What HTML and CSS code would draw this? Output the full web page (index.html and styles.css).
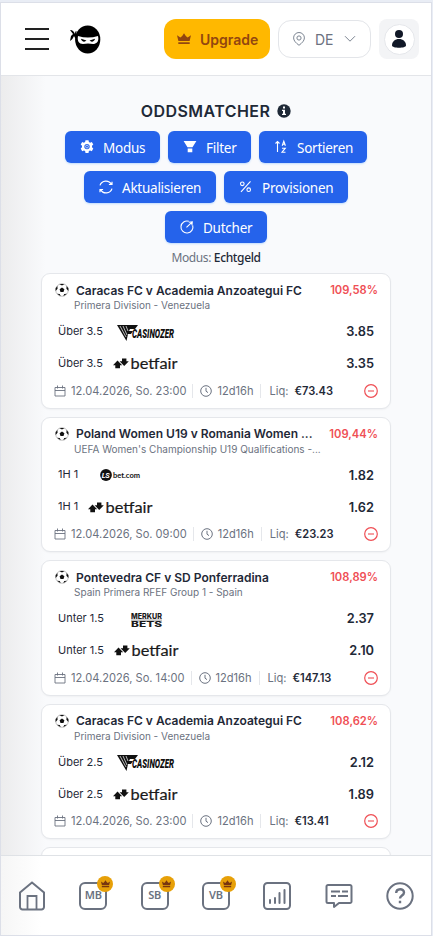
FILE: index.html
```
<!DOCTYPE html>
<html lang="de">
<head>
<meta charset="utf-8">
<title>Oddsmatcher</title>
<link rel="stylesheet" href="styles.css">
</head>
<body>
<svg class="defs" width="0" height="0">
  <symbol id="crown" viewBox="0 0 14 12"><path fill="currentColor" d="M0 2.200 3.400 4.600 5.200 3 7 .2 8.800 3l1.800 1.600L14 2.200 12.600 8H1.400zM1.300 9.200h11.400v1.800H1.300z"/></symbol>
  <symbol id="ball" viewBox="0 0 14 14"><circle cx="7" cy="7" r="6.300" fill="#fff" stroke="#999" stroke-width=".6"/><path fill="#111" d="m7 4.600 2.400 1.700-.9 2.800h-3l-.9-2.800zM4.300.9h5.200L7 2.500zM.6 5.200 2.400 3l.2 2.700L.6 8zM13.400 5.200 11.600 3l-.2 2.700L13.400 8zM2 10.800l2.800.1.9 2.400zM12 10.800l-2.800.1-.9 2.400z"/></symbol>
  <symbol id="calendar" viewBox="0 0 12 12"><path fill="none" stroke="#6b7280" stroke-width=".9" d="M1 2.500h10v8.500H1zM1 5.500h10M3.500.5v3M8.500.5v3"/></symbol>
  <symbol id="clock" viewBox="0 0 12 12"><circle cx="6" cy="6" r="5.300" fill="none" stroke="#6b7280"/><path fill="none" stroke="#6b7280" d="M6 2.800v3.400l2 1.400"/></symbol>
  <symbol id="minus" viewBox="0 0 14 14"><circle cx="7" cy="7" r="6.300" fill="none" stroke="#ef4f55" stroke-width="1.200"/><path stroke="#ef4f55" stroke-width="1.100" d="M4 7h6"/></symbol>
  <symbol id="arrows" viewBox="0 0 66 15"><path fill="#111" d="m4.500 4.500 4.700 4.700H7v3H2.300v-3H0zM11.200 10 6.600 5.300H9V2.500h4.400v2.800h2.400z"/></symbol>
  <symbol id="wing" viewBox="0 0 58 16"><path fill="#111" d="M0 0h21l-3 4h-5l-1 2h4l-2 3h-3L9.500 16z"/><path stroke="#fff" stroke-width=".7" fill="none" d="m3 1 6 11M6 1l4 9M9 1l2 5"/></symbol>
</svg>
<div class="app">
  <header class="header">
    <svg class="burger" width="24" height="24" viewBox="0 0 24 24"><path stroke="#222" stroke-width="2" d="M0 2h24M0 12h24M0 22h24"/></svg>
    <svg class="ninja" width="31" height="29" viewBox="0 0 31 29"><ellipse cx="17.700" cy="14.500" rx="12.600" ry="14"/><path d="M0 5c3 0 4 2 5 4 0-2 .5-3 1.500-3l-.5 8c-1-1-1.500-2-2-3-1 2-2 4-4 5l1-5 2-2z"/><path fill="#fff" d="M8 11q10 3 20 0c1.500 6-2 8-5 8q-5-1-10 0c-4 0-6-3-5-8z"/><path d="m11 13.800 5.500 1.800c-2 2-5 1-5.500-1.800zM25 13.800l-5.500 1.800c2 2 5 1 5.500-1.800z"/></svg>
    <button class="upgrade"><svg width="14" height="12"><use href="#crown"/></svg><span>Upgrade</span></button>
    <button class="lang"><svg width="12" height="14" viewBox="0 0 12 14" fill="none" stroke="#7c8592"><path d="M6 13.300C3 11 .6 8.700.6 5.900a5.400 5.400 0 0 1 10.800 0C11.400 8.700 9 11 6 13.300z"/><circle cx="6" cy="6" r="2.100"/></svg><span>DE</span><svg width="12" height="8" viewBox="0 0 12 8"><path fill="none" stroke="#7c8592" d="m1 1.200 5 5 5-5"/></svg></button>
    <div class="account"><div class="avatar"><svg width="16" height="18" viewBox="0 0 16 18" fill="#111827"><circle cx="8" cy="4" r="4"/><path d="M1 15.500c0-4 3-6.500 7-6.500s7 2.500 7 6.500c0 3-14 3-14 0z"/></svg></div></div>
  </header>
  <main class="content">
    <h1><span>ODDSMATCHER</span><svg width="14" height="14" viewBox="0 0 14 14"><circle cx="7" cy="7" r="6.700" fill="#1f2937"/><path fill="#fff" d="M6 2.500h2v2H6zM5 5.700h3v4h1v1.400H5V9.700h1V7H5z"/></svg></h1>
    <div class="actions">
      <button><svg viewBox="0 0 14 14"><path fill="#fff" fill-rule="evenodd" d="m5.500.3h3l.4 1.800 1.200.6 1.700-.8 1.500 2.500-1.300 1.300v1.600l1.300 1.300-1.500 2.600-1.700-.7-1.200.6-.4 1.800h-3l-.4-1.800-1.200-.6-1.700.7L.7 8.600 2 7.300V5.700L.7 4.400l1.500-2.500 1.700.8 1.200-.6zM7 3.900a2.700 2.700 0 1 0 0 5.400 2.700 2.700 0 0 0 0-5.400"/><circle cx="7" cy="6.600" r="1.400" fill="none" stroke="#fff" stroke-width=".6"/></svg><span class="w43">Modus</span></button>
      <button><svg viewBox="0 0 14 14"><path fill="#fff" d="M.6 1h12.800L9.500 7.300h-5zM4.700 8.600h4.600v3.700H4.700z"/></svg><span class="w31">Filter</span></button>
      <button><svg viewBox="0 0 14 14"><path fill="none" stroke="#fff" stroke-width="1.100" d="M3.500 12V1.500M1.500 3.500l2-2 2 2M8.200 5.700l1.600-4.500 1.600 4.500M8.700 4.300h2.200M8 8.200h3.300L8 12.200h3.500"/></svg><span class="w56">Sortieren</span></button>
      <button><svg viewBox="0 0 14 14"><path fill="none" stroke="#fff" stroke-width="1.200" d="M1 5.400a6.200 6.200 0 0 1 11.400-1M13 8.600a6.200 6.200 0 0 1-11.400 1M9.900 4.500H13V1.700M4.100 9.500H1v2.800"/></svg><span class="w80">Aktualisieren</span></button>
      <button><svg viewBox="0 0 14 14"><g fill="none" stroke="#fff" stroke-width="1.100"><circle cx="3.300" cy="3.800" r="1.800"/><circle cx="9.700" cy="9.700" r="1.800"/><path d="m2 11.800 9.500-10.500"/></g></svg><span class="w72">Provisionen</span></button>
      <button><svg viewBox="0 0 14 14"><path fill="none" stroke="#fff" stroke-width="1.100" d="M8.800 1.300a6 6 0 1 0 3.900 4M6.500 7.400l5.800-5.600M8.800 2.300l3.500-.5-.4 3.400"/></svg><span class="w50">Dutcher</span></button>
    </div>
    <p class="mode">Modus: <b>Echtgeld</b></p>
    <section class="list">
      <article class="card">
        <div class="top"><svg width="14" height="14"><use href="#ball"/></svg><h2>Caracas FC v Academia Anzoategui FC</h2><strong>109,58%</strong></div>
        <p class="league">Primera Division - Venezuela</p>
        <div class="bet"><span>Über 3.5</span><svg class="casinozer" width="58" height="16"><use href="#wing"/><text x="15" y="12.500" textLength="42" lengthAdjust="spacingAndGlyphs">CASINOZER</text></svg><b>3.85</b></div>
        <div class="bet"><span>Über 3.5</span><svg class="betfair" width="66" height="15"><use href="#arrows"/><text x="17.500" y="12.500" textLength="47" lengthAdjust="spacingAndGlyphs">betfair</text></svg><b>3.35</b></div>
        <div class="meta"><svg width="12" height="12"><use href="#calendar"/></svg><span class="date">12.04.2026, So. 23:00</span><i></i><svg width="12" height="12"><use href="#clock"/></svg><span class="left">12d16h</span><i></i><span class="liq">Liq:</span><b>€73.43</b><svg class="hide" width="14" height="14"><use href="#minus"/></svg></div>
      </article>
      <article class="card">
        <div class="top"><svg width="14" height="14"><use href="#ball"/></svg><h2>Poland Women U19 v Romania Women ...</h2><strong>109,44%</strong></div>
        <p class="league">UEFA Women's Championship U19 Qualifications -...</p>
        <div class="bet short"><span>1H 1</span><svg class="lsbet" width="40" height="12"><circle cx="6" cy="6" r="5.900" fill="#111"/><text class="ls" x="1.800" y="8.800" textLength="8">LS</text><text x="13" y="9" textLength="27" lengthAdjust="spacingAndGlyphs">bet.com</text></svg><b>1.82</b></div>
        <div class="bet short"><span>1H 1</span><svg class="betfair" width="66" height="15"><use href="#arrows"/><text x="17.500" y="12.500" textLength="47" lengthAdjust="spacingAndGlyphs">betfair</text></svg><b>1.62</b></div>
        <div class="meta"><svg width="12" height="12"><use href="#calendar"/></svg><span class="date">12.04.2026, So. 09:00</span><i></i><svg width="12" height="12"><use href="#clock"/></svg><span class="left">12d16h</span><i></i><span class="liq">Liq:</span><b>€23.23</b><svg class="hide" width="14" height="14"><use href="#minus"/></svg></div>
      </article>
      <article class="card">
        <div class="top"><svg width="14" height="14"><use href="#ball"/></svg><h2>Pontevedra CF v SD Ponferradina</h2><strong>108,89%</strong></div>
        <p class="league">Spain Primera RFEF Group 1 - Spain</p>
        <div class="bet wide"><span>Unter 1.5</span><svg class="merkur" width="31" height="15"><path fill="#c4c4c4" d="M0 6.300h31v2.500H0z"/><text x="0" y="5.500" textLength="31" lengthAdjust="spacingAndGlyphs">MERKUR</text><text x="0" y="14" textLength="31" lengthAdjust="spacingAndGlyphs">BETS</text></svg><b>2.37</b></div>
        <div class="bet wide"><span>Unter 1.5</span><svg class="betfair" width="66" height="15"><use href="#arrows"/><text x="17.500" y="12.500" textLength="47" lengthAdjust="spacingAndGlyphs">betfair</text></svg><b>2.10</b></div>
        <div class="meta"><svg width="12" height="12"><use href="#calendar"/></svg><span class="date">12.04.2026, So. 14:00</span><i></i><svg width="12" height="12"><use href="#clock"/></svg><span class="left">12d16h</span><i></i><span class="liq">Liq:</span><b>€147.13</b><svg class="hide" width="14" height="14"><use href="#minus"/></svg></div>
      </article>
      <article class="card">
        <div class="top"><svg width="14" height="14"><use href="#ball"/></svg><h2>Caracas FC v Academia Anzoategui FC</h2><strong>108,62%</strong></div>
        <p class="league">Primera Division - Venezuela</p>
        <div class="bet"><span>Über 2.5</span><svg class="casinozer" width="58" height="16"><use href="#wing"/><text x="15" y="12.500" textLength="42" lengthAdjust="spacingAndGlyphs">CASINOZER</text></svg><b>2.12</b></div>
        <div class="bet"><span>Über 2.5</span><svg class="betfair" width="66" height="15"><use href="#arrows"/><text x="17.500" y="12.500" textLength="47" lengthAdjust="spacingAndGlyphs">betfair</text></svg><b>1.89</b></div>
        <div class="meta"><svg width="12" height="12"><use href="#calendar"/></svg><span class="date">12.04.2026, So. 23:00</span><i></i><svg width="12" height="12"><use href="#clock"/></svg><span class="left">12d16h</span><i></i><span class="liq">Liq:</span><b>€13.41</b><svg class="hide" width="14" height="14"><use href="#minus"/></svg></div>
      </article>
      <article class="card"></article>
    </section>
  </main>
  <nav class="nav">
    <svg width="28" height="30" viewBox="0 0 28 30" fill="none" stroke="#6b7280" stroke-width="2"><path d="M2 11.500 14 1.500l12 10V26a2.500 2.500 0 0 1-2.500 2.500h-19A2.500 2.500 0 0 1 2 26z"/><path d="M9.500 28V15h9v13" stroke-width="1.800"/></svg>
    <div class="tile">MB<em><svg width="9" height="8"><use href="#crown"/></svg></em></div>
    <div class="tile">SB<em><svg width="9" height="8"><use href="#crown"/></svg></em></div>
    <div class="tile">VB<em><svg width="9" height="8"><use href="#crown"/></svg></em></div>
    <svg width="28" height="28" viewBox="0 0 28 28" fill="none" stroke="#6b7280" stroke-width="2"><rect x="1" y="1" width="26" height="26" rx="3.500"/><path stroke-linecap="round" d="M7 21v-3M12 21v-5M16.500 21V11M21.500 21V8"/></svg>
    <svg width="28" height="28" viewBox="0 0 28 28" fill="none" stroke="#6b7280" stroke-width="2"><path stroke-linejoin="round" d="M3 3h22a1.500 1.500 0 0 1 1.500 1.500v15A1.500 1.500 0 0 1 25 21H14l-5 4v-4H3a1.500 1.500 0 0 1-1.500-1.500v-15A1.500 1.500 0 0 1 3 3z"/><path d="M6 9.500h9M17 9.500h6M6 14h5M13 14h10"/></svg>
    <svg width="28" height="28" viewBox="0 0 28 28" fill="none" stroke="#6b7280" stroke-width="2"><circle cx="14" cy="14" r="12.700"/><path stroke-width="2.400" d="M10.200 11c0-5 7.800-5 7.800-.5 0 3-4 3-4 6M14 18.800v2.500"/></svg>
  </nav>
</div>
</body>
</html>
```
FILE: styles.css
```
* { box-sizing: border-box; margin: 0; padding: 0; }
body { background: #e9edf5; font-family: Inter, sans-serif; color: #1f2937; height: 936px; overflow: hidden; }
svg { display: block; flex: none; overflow: visible; }
.defs { position: absolute; }
button { font: inherit; border: 0; }
.app { height: 934px; margin-top: 2px; width: 432px; border: 1px solid #dcdfe8; display: flex; flex-direction: column; background: #f9fafc; }
.header { height: 73px; flex: none; background: #fff; border-bottom: 1px solid #e3e5e9; display: flex; align-items: center; padding: 0 12px 0 24px; }
.ninja { margin-left: 21px; }
.upgrade { margin-left: 63px; width: 106px; height: 40px; border-radius: 12px; background: #ffb800; color: #924610; display: flex; align-items: center; padding-left: 13px; font-size: 14px; font-weight: 600; }
.upgrade span { margin-left: 9px; }
.lang { margin-left: 8px; width: 93px; height: 38px; border-radius: 13px; border: 1px solid #e3e5e9; background: #fff; display: flex; align-items: center; padding-left: 14px; color: #6b7280; font-size: 14px; }
.lang span { margin: 0 10px; }
.account { margin-left: 8px; width: 40px; height: 40px; border-radius: 8px; background: #f3f4f6; display: grid; place-items: center; }
.avatar { width: 31px; height: 31px; border-radius: 50%; background: #fff; border: 1px solid #e5e7eb; display: grid; place-items: center; }
.content { flex: 1; min-height: 0; overflow: hidden; padding: 26px 40px 0; background: linear-gradient(90deg, #ececed, #f9fafc 45px); }
h1 { display: flex; justify-content: center; align-items: center; gap: 7px; font-size: 16px; line-height: 18px; font-weight: 600; letter-spacing: .45px; }
.actions { display: flex; flex-wrap: wrap; justify-content: center; gap: 8px; margin: 11px 0 0; }
.actions button { height: 32px; border-radius: 6px; background: #2563eb; color: #fff; display: flex; align-items: center; gap: 9px; padding: 1px 14px 0 15px; font-family: "Noto Sans", sans-serif; font-size: 13.500px; letter-spacing: -.25px; white-space: nowrap; box-shadow: 0 1px 2px #bfdbfe; }
.actions span { text-align: left; }
.w31 { width: 31px; }
.w43 { width: 43px; }
.w50 { width: 50px; }
.w56 { width: 56px; }
.w72 { width: 72px; }
.w80 { width: 80px; }
.actions svg { width: 14px; height: 14px; margin-top: -1px; }
.mode { font: 12px/16px "Noto Sans", sans-serif; letter-spacing: -.37px; text-align: center; color: #6b7280; margin-top: 7px; }
.mode b { color: #1f2937; font-weight: 500; }
.list { display: flex; flex-direction: column; gap: 8px; margin-top: 7px; }
.card { height: 135.500px; flex: none; background: #fff; border: 1px solid #e5e7eb; border-radius: 9px; box-shadow: 0 1px 2px #0000000a; padding: 8px 12px 0; }
.top { display: flex; align-items: center; height: 16px; }
.top svg { margin-left: 1px; }
h2 { font-size: 12px; font-weight: 600; margin-left: 7px; white-space: nowrap; }
.top strong { margin-left: auto; font-size: 11.200px; font-weight: 600; color: #ef4f55; }
.league { font-size: 10px; line-height: 13px; padding-top: 1px; color: #6b7280; margin-left: 20px; white-space: nowrap; }
.bet { height: 32px; display: flex; align-items: center; padding: 7px 4px 0; }
.bet span { width: 54px; font-size: 11px; margin-top: -1px; white-space: nowrap; }
.short span { width: 30px; margin-top: -3px; }
.wide span { width: 55px; }
.bet b { margin-left: auto; font-size: 12.800px; font-weight: 600; }
.bet .betfair { margin-left: 1px; }
.short .betfair { margin-left: 0; }
.betfair text { font: 400 15.500px Lato, sans-serif; fill: #1a1a1a; stroke: #1a1a1a; stroke-width: .2px; }
.casinozer { margin: 2px 0 0 5px; }
.casinozer text { font: italic 900 12px Roboto, sans-serif; fill: #111; }
.lsbet { margin-left: 12px; }
.lsbet text { font: 700 8px Lato, sans-serif; fill: #111; }
.lsbet .ls { font: italic 700 7.500px Roboto, sans-serif; fill: #fff; }
.merkur { margin-left: 18px; margin-top: 3px; }
.merkur text { font: 800 7px Inter, sans-serif; fill: #1a1a1a; }
.meta { display: flex; align-items: center; height: 24px; padding-top: 5px; color: #6b7280; font-size: 11.100px; white-space: nowrap; }
.meta .date { margin-left: 5px; }
.meta i { width: 1px; height: 14px; background: #e5e7eb; margin: 0 7px 0 6px; }
.meta .left { margin-left: 5px; }
.meta .left + i { margin: 0 8px 0 7px; }
.meta b { color: #1f2937; font-weight: 600; font-size: 11.100px; margin-left: 6px; }
.hide { margin-left: auto; }
.nav { height: 80px; flex: none; border-top: 1px solid #dfe2e6; background: linear-gradient(90deg, #f6f6f6, #fff 40px); display: flex; align-items: center; justify-content: space-between; padding: 0 17px; }
.tile { position: relative; width: 28px; height: 28px; border: 2px solid #6b7280; border-radius: 6px; display: grid; place-items: center; font: 600 11px "Noto Sans", sans-serif; letter-spacing: -.2px; color: #6b7280; padding-bottom: 2px; }
.tile em { position: absolute; left: 16px; top: -8px; width: 16px; height: 16px; border-radius: 50%; background: #e7a008; color: #78350f; display: grid; place-items: center; }
```
